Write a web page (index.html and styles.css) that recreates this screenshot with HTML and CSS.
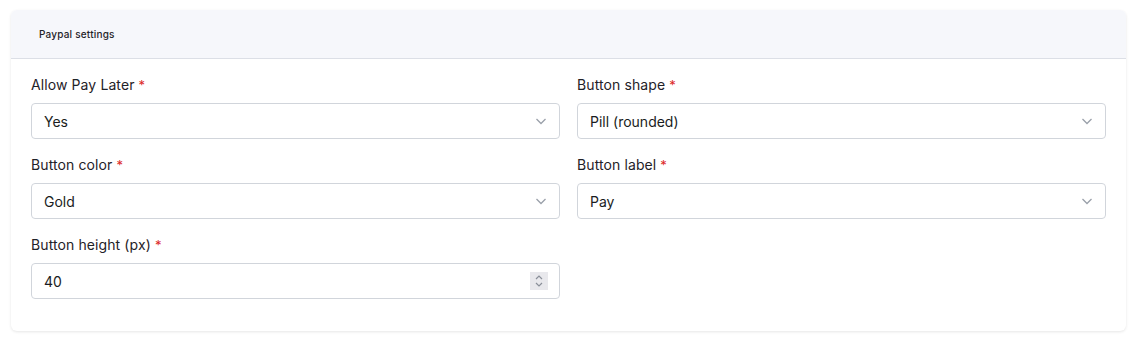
FILE: index.html
```html
<!DOCTYPE html>
<html lang="en">
<head>
    <meta charset="UTF-8">
    <meta name="viewport" content="width=device-width, initial-scale=1.0">
    <title>Paypal settings</title>
    <link rel="stylesheet" href="styles.css">
</head>
<body>
    <div class="card">
        <div class="card-header">Paypal settings</div>

        <div class="card-body">
            <div class="field">
                <label class="field-label">Allow Pay Later <span class="required">*</span></label>
                <div class="select-wrap">
                    <select class="field-input">
                        <option>Yes</option>
                        <option>No</option>
                    </select>
                    <svg class="chevron" width="12" height="12" viewBox="0 0 12 12" fill="none" stroke="currentColor" stroke-width="1.3">
                        <polyline points="1.5,4 6,8.5 10.5,4"></polyline>
                    </svg>
                </div>
            </div>

            <div class="field">
                <label class="field-label">Button shape <span class="required">*</span></label>
                <div class="select-wrap">
                    <select class="field-input">
                        <option>Pill (rounded)</option>
                        <option>Rectangle</option>
                    </select>
                    <svg class="chevron" width="12" height="12" viewBox="0 0 12 12" fill="none" stroke="currentColor" stroke-width="1.3">
                        <polyline points="1.5,4 6,8.5 10.5,4"></polyline>
                    </svg>
                </div>
            </div>

            <div class="field">
                <label class="field-label">Button color <span class="required">*</span></label>
                <div class="select-wrap">
                    <select class="field-input">
                        <option>Gold</option>
                        <option>Blue</option>
                        <option>Silver</option>
                    </select>
                    <svg class="chevron" width="12" height="12" viewBox="0 0 12 12" fill="none" stroke="currentColor" stroke-width="1.3">
                        <polyline points="1.5,4 6,8.5 10.5,4"></polyline>
                    </svg>
                </div>
            </div>

            <div class="field">
                <label class="field-label">Button label <span class="required">*</span></label>
                <div class="select-wrap">
                    <select class="field-input">
                        <option>Pay</option>
                        <option>Checkout</option>
                        <option>Buy now</option>
                    </select>
                    <svg class="chevron" width="12" height="12" viewBox="0 0 12 12" fill="none" stroke="currentColor" stroke-width="1.3">
                        <polyline points="1.5,4 6,8.5 10.5,4"></polyline>
                    </svg>
                </div>
            </div>

            <div class="field">
                <label class="field-label">Button height (px) <span class="required">*</span></label>
                <div class="select-wrap">
                    <input type="number" class="field-input" value="40">
                    <span class="spinner">
                        <svg width="10" height="14" viewBox="0 0 10 14" fill="none" stroke="currentColor" stroke-width="1.2">
                            <polyline points="2,5 5,2 8,5"></polyline>
                            <polyline points="2,9 5,12 8,9"></polyline>
                        </svg>
                    </span>
                </div>
            </div>
        </div>
    </div>
</body>
</html>
```
FILE: styles.css
```css
* {
    margin: 0;
    padding: 0;
    box-sizing: border-box;
}

body {
    font-family: Inter, 'Noto Sans', sans-serif;
    background: white;
    padding: 10px 14px 12px 11px;
}

.card {
    background: white;
    border-radius: 6px;
    box-shadow: 0 1px 3px rgba(0, 0, 0, 0.1);
    overflow: hidden;
}

.card-header {
    background: #f6f7fb;
    border-bottom: 1px solid #dcdfe6;
    height: 49px;
    padding: 0 28px;
    display: flex;
    align-items: center;
    font-size: 10px;
    font-weight: 500;
    letter-spacing: 0.2px;
    color: #1f2328;
}

.card-body {
    display: grid;
    grid-template-columns: 1fr 1fr;
    column-gap: 17px;
    row-gap: 16px;
    padding: 16px 20px 32px 20px;
}

.field-label {
    display: block;
    font-size: 14px;
    line-height: 20px;
    font-weight: 400;
    letter-spacing: 0.1px;
    color: #1f2228;
    margin-bottom: 8px;
}

.required {
    color: #dc2626;
    font-size: 13px;
}

.select-wrap {
    position: relative;
}

.field-input {
    width: 100%;
    height: 36px;
    padding: 0 12px;
    border: 1px solid #d1d5db;
    border-radius: 4px;
    background: white;
    font-family: inherit;
    font-size: 14px;
    color: #1a1d22;
    appearance: none;
    -webkit-appearance: none;
    outline: none;
}

.field-input::-webkit-inner-spin-button,
.field-input::-webkit-outer-spin-button {
    -webkit-appearance: none;
    margin: 0;
}

.chevron {
    position: absolute;
    right: 13px;
    top: 12px;
    color: #9aa0aa;
    pointer-events: none;
}

.spinner {
    position: absolute;
    right: 12px;
    top: 9px;
    width: 18px;
    height: 18px;
    background: #e8e8ec;
    display: flex;
    align-items: center;
    justify-content: center;
    color: #8a8f99;
    pointer-events: none;
}
```
